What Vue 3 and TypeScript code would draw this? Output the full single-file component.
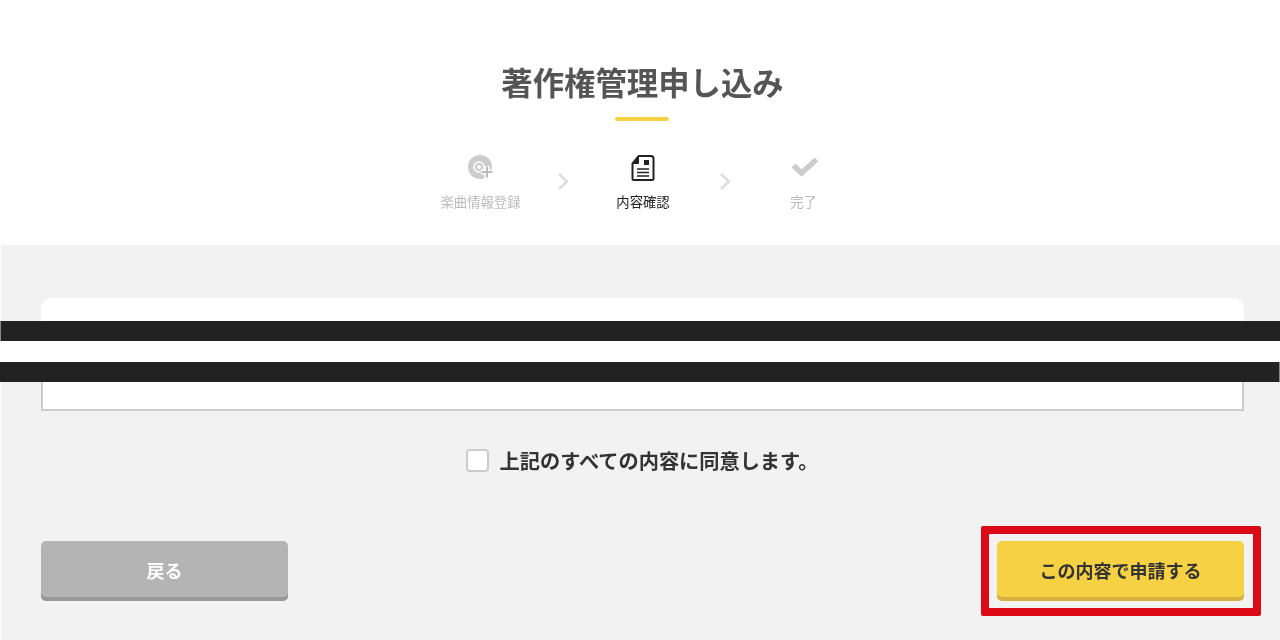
<script setup lang="ts">
const agreeText: string = '上記のすべての内容に同意します。'
</script>

<template>
  <div class="page">
    <header class="header">
      <h1 class="title">著作権管理申し込み</h1>
      <div class="rule"></div>
      <ol class="steps">
        <li class="step">
          <svg class="icon" width="30" height="28" viewBox="0 0 30 28">
            <circle cx="14" cy="13" r="12" fill="#ccc" />
            <circle cx="13" cy="13" r="5" fill="none" stroke="#fff" stroke-width="1.5" />
            <circle cx="13" cy="13" r="2" fill="#fff" />
            <path d="M21 12v12M15 18h12" stroke="#fff" stroke-width="5" />
            <path d="M21 12.5v11M15.500 18h11" stroke="#bbb" stroke-width="2" />
          </svg>
          <span class="label">楽曲情報登録</span>
        </li>
        <li class="chevron chevron-first">
          <svg width="13" height="19" viewBox="0 0 13 19"><path d="M2 2l8 7.500-8 7.500" fill="none" stroke="#ddd" stroke-width="2.500" /></svg>
        </li>
        <li class="step active">
          <svg class="icon" width="30" height="28" viewBox="0 0 30 28">
            <path d="M10.500 2H23a2.500 2.500 0 0 1 2.500 2.500v20A1.500 1.500 0 0 1 24 26H6a1.500 1.500 0 0 1-1.500-1.500V9.500z" fill="#fff" stroke="#222" stroke-width="2" stroke-linejoin="round" />
            <path d="M4.500 9.500L10.500 2V9.500z" fill="#222" stroke="#222" stroke-width="1" stroke-linejoin="round" />
            <rect x="16" y="6" width="5" height="5" fill="#222" />
            <path d="M9 15h12M9 18.500h12M9 22h12" stroke="#222" stroke-width="1.500" />
          </svg>
          <span class="label">内容確認</span>
        </li>
        <li class="chevron chevron-second">
          <svg width="13" height="19" viewBox="0 0 13 19"><path d="M2 2l8 7.500-8 7.500" fill="none" stroke="#ddd" stroke-width="2.500" /></svg>
        </li>
        <li class="step">
          <svg class="icon" width="30" height="28" viewBox="0 0 30 28">
            <path d="M4.500 11.500l8 7.500L27.500 5.500" fill="none" stroke="#ccc" stroke-width="5.500" />
          </svg>
          <span class="label">完了</span>
        </li>
      </ol>
    </header>

    <main class="main">
      <section class="card">
        <div class="card-head"></div>
        <div class="card-body"></div>
      </section>

      <label class="agree">
        <span class="checkbox"></span>
        <span class="agree-text">{{ agreeText }}</span>
      </label>

      <div class="actions">
        <button class="btn btn-back" type="button">戻る</button>
        <button class="btn btn-submit" type="button">この内容で申請する</button>
      </div>
    </main>

    <div class="redaction">
      <div class="bar bar-first"></div>
      <div class="bar bar-second"></div>
    </div>
    <div class="highlight"></div>
  </div>
</template>

<style>
html, body { margin: 0; padding: 0; background: #fff; }
</style>

<style scoped>
.page {
  position: relative;
  width: 1280px;
  height: 640px;
  overflow: hidden;
  will-change: transform;
  font-family: "Noto Sans CJK JP", "Noto Sans", sans-serif;
}
.header {
  height: 245px;
  box-sizing: border-box;
  padding: 62px 0 0 5px;
  display: flex;
  flex-direction: column;
  align-items: center;
}
.title {
  margin: 0;
  font-size: 31.400px;
  line-height: 40px;
  font-weight: 700;
  color: #555;
}
.rule {
  width: 54px;
  height: 4px;
  margin: 15px 0 0 -2px;
  border-radius: 2px;
  background: #f6d143;
}
.steps {
  display: flex;
  margin: 33px 0 0 -1px;
  padding: 0;
  list-style: none;
}
.step {
  width: 100px;
  display: flex;
  flex-direction: column;
  align-items: center;
  color: #bbb;
}
.step.active { color: #222; }
.icon { display: block; }
.label {
  margin-top: 10px;
  font-size: 13.330px;
  line-height: 20px;
  white-space: nowrap;
}
.chevron {
  box-sizing: border-box;
  padding: 18px 0 0 5px;
  display: flex;
  justify-content: center;
}
.chevron-first { width: 62.500px; padding-left: 3px; }
.chevron-second { width: 60.500px; }
.chevron svg { display: block; }
.main {
  margin-left: 1px;
  height: 395px;
  box-sizing: border-box;
  padding: 53px 36px 0 40px;
  background: #f2f2f2;
}
.card { height: 113px; display: flex; flex-direction: column; }
.card-head {
  height: 50px;
  background: #fff;
  border-radius: 10px 10px 0 0;
}
.card-body {
  flex: 1;
  background: #fff;
  border: 2px solid #ccc;
  border-top: 0;
}
.agree {
  margin-top: 38px;
  height: 23px;
  display: flex;
  align-items: center;
  justify-content: center;
  gap: 11px;
  padding-right: 1px;
  font-size: 20.200px;
  font-weight: 700;
  color: #333;
}
.agree-text { margin-bottom: 1px; }
.checkbox {
  width: 23px;
  height: 23px;
  box-sizing: border-box;
  background: #fff;
  border: 2px solid #ccc;
  border-radius: 4px;
}
.actions {
  margin-top: 69px;
  display: flex;
  justify-content: space-between;
}
.btn {
  width: 247px;
  height: 60px;
  padding: 0 0 3px;
  border: 0;
  border-radius: 5px;
  font-family: inherit;
  font-size: 18px;
  font-weight: 700;
}
.btn-back {
  color: #fff;
  background: #b4b4b4;
  box-shadow: inset 0 -4px 0 #999;
}
.btn-submit {
  color: #333;
  background: #f6d143;
  box-shadow: inset 0 -4px 0 #d5b23f;
}
.redaction {
  position: absolute;
  left: 0;
  right: 0;
  top: 321px;
  height: 61px;
  background: #fff;
  display: flex;
  flex-direction: column;
  justify-content: space-between;
}
.bar { height: 20px; background: #222; }
.bar-first { border-left: 1px solid #888; }
.bar-second { border-right: 1px solid #888; }
.highlight {
  position: absolute;
  left: 981px;
  top: 526px;
  width: 280px;
  height: 90px;
  box-sizing: border-box;
  border: 8px solid #dc0a16;
  border-radius: 2px;
}
</style>
